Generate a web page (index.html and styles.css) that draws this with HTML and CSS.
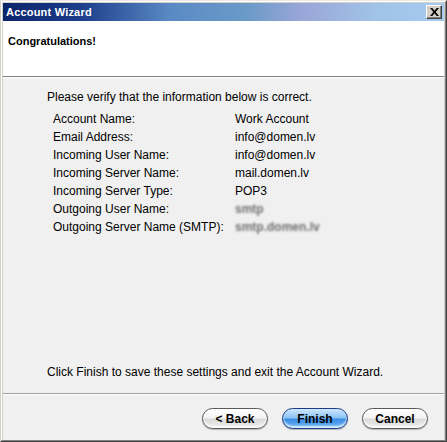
FILE: index.html
```html
<!DOCTYPE html>
<html>
<head>
<meta charset="utf-8">
<link rel="stylesheet" href="styles.css">
</head>
<body>
<div class="window">
  <div class="frame">
    <div class="titlebar">
      <span class="title">Account Wizard</span>
      <span class="close"><svg width="9" height="8" viewBox="0 0 9 8"><path d="M0 0h2.3l2.2 2.7L6.7 0H9L5.7 4 9 8H6.7L4.5 5.3 2.3 8H0l3.3-4z" fill="#000"/></svg></span>
    </div>
    <div class="header">
      <h1 class="heading">Congratulations!</h1>
    </div>
    <div class="content">
      <p class="intro">Please verify that the information below is correct.</p>
      <div class="summary">
        <span class="label">Account Name:</span><span class="value">Work Account</span>
        <span class="label">Email Address:</span><span class="value">info@domen.lv</span>
        <span class="label">Incoming User Name:</span><span class="value">info@domen.lv</span>
        <span class="label">Incoming Server Name:</span><span class="value">mail.domen.lv</span>
        <span class="label">Incoming Server Type:</span><span class="value">POP3</span>
        <span class="label">Outgoing User Name:</span><span class="value blur">smtp</span>
        <span class="label">Outgoing Server Name (SMTP):</span><span class="value blur">smtp.domen.lv</span>
      </div>
      <p class="outro">Click Finish to save these settings and exit the Account Wizard.</p>
    </div>
    <div class="footer">
      <button class="btn">&lt; Back</button>
      <button class="btn btn-primary">Finish</button>
      <button class="btn">Cancel</button>
    </div>
  </div>
</div>
</body>
</html>
```

FILE: styles.css
```css
html, body {
  margin: 0;
  padding: 0;
  background: #d4d0c8;
}
body {
  font-family: "Liberation Sans", Arial, sans-serif;
  font-size: 12px;
  color: #000;
}
.window {
  width: 447px;
  height: 442px;
  box-sizing: border-box;
  border: 1px solid;
  border-color: #ece8e4 #404040 #404040 #d4d0c8;
}
.frame {
  height: 100%;
  box-sizing: border-box;
  border: 1px solid;
  border-color: #ffffff #808080 #808080 #ffffff;
  padding: 1px;
  padding-bottom: 0;
  background: #d4d0c8;
  display: flex;
  flex-direction: column;
}
.titlebar {
  height: 18px;
  flex: none;
  display: flex;
  align-items: center;
  justify-content: space-between;
  padding: 0 2px 0 3px;
  background: linear-gradient(to right, #0a246a 0%, #1e3f8c 18%, #5a8ac4 38%, #6a9ac8 55%, #9aa6d8 68%, #a0c4e8 85%, #a6caf0 100%);
}
.title {
  color: #fff;
  font-weight: bold;
  font-size: 11px;
  letter-spacing: 0.2px;
}
.close {
  width: 16px;
  height: 14px;
  box-sizing: border-box;
  background: #d4d0c8;
  border: 1px solid;
  border-color: #ffffff #404040 #404040 #ffffff;
  box-shadow: inset -1px -1px 0 #808080;
  display: flex;
  align-items: center;
  justify-content: center;
}
.header {
  height: 56px;
  flex: none;
  background: #fff;
  border-bottom: 1px solid #808080;
  box-sizing: border-box;
  padding: 13px 5px 0;
}
.heading {
  margin: 0;
  font-size: 11px;
  font-weight: bold;
  line-height: 14px;
}
.content {
  flex: 1;
  background: #f0f0f0;
  padding: 10px 16px 12px 44px;
  border-top: 1px solid #ffffff;
  display: flex;
  flex-direction: column;
  border-bottom: 1px solid #a0a0a0;
}
.intro, .outro {
  margin: 0;
  line-height: 18px;
}
.summary {
  margin-top: 4px;
  display: grid;
  grid-template-columns: 182px 1fr;
  padding-left: 6px;
  line-height: 18px;
}
.blur {
  color: #707070;
  font-weight: bold;
  filter: blur(1.1px);
}
.outro {
  margin-top: auto;
}
.footer {
  height: 46px;
  flex: none;
  background: #f0f0f0;
  display: flex;
  justify-content: flex-end;
  align-items: flex-start;
  gap: 14px;
  padding: 13px 16px 0 0;
  box-sizing: border-box;
  border-top: 1px solid #ffffff;
}
.btn {
  width: 66px;
  height: 21px;
  border-radius: 11px;
  border: 1px solid #5a5a5a;
  background: linear-gradient(to bottom, #ffffff 0%, #f4f4f4 45%, #dcdcdc 55%, #ececec 100%);
  box-shadow: inset 0 -2px 2px rgba(255,255,255,0.8), 0 1px 1px rgba(0,0,0,0.25);
  font-family: "Liberation Sans", Arial, sans-serif;
  font-size: 12px;
  font-weight: bold;
  color: #000;
  padding: 0;
}
.btn-primary {
  border-color: #1c3c88;
  background: linear-gradient(to bottom, #cfe8ff 0%, #8cc4f4 45%, #3e8ce4 55%, #6cb8f8 100%);
}
```
